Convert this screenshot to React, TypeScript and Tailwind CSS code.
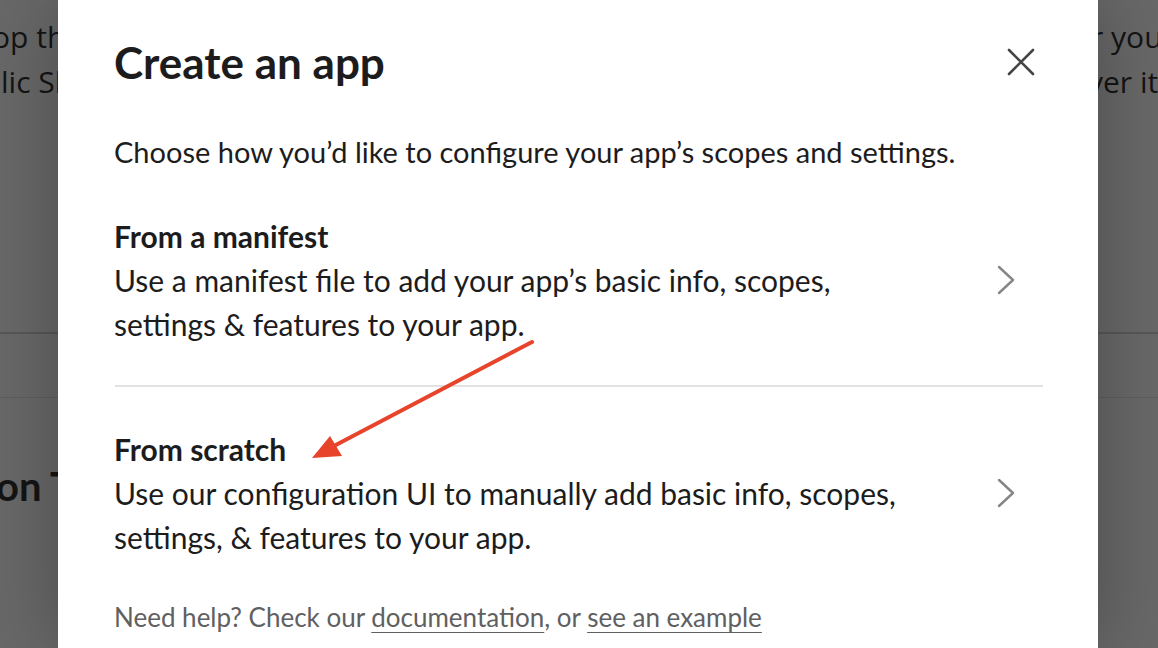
import React from "react";

function Chevron() {
  return (
    <svg width="18" height="30" viewBox="0 0 18 30" className="shrink-0">
      <polyline
        points="2,2 16,15 2,28"
        fill="none"
        stroke="#868686"
        strokeWidth="2.4"
        strokeLinecap="round"
        strokeLinejoin="round"
      />
    </svg>
  );
}

function Option({ title, lines }: { title: string; lines: string[] }) {
  return (
    <div className="flex items-center justify-between pr-[27px]">
      <div className="text-[#1d1c1d]">
        <div className="text-[30px] font-bold leading-[44px]">{title}</div>
        {lines.map((l, i) => (
          <div key={i} className="text-[30px] leading-[44px]">
            {l}
          </div>
        ))}
      </div>
      <Chevron />
    </div>
  );
}

export default function App() {
  return (
    <div
      className="relative h-[648px] w-[1158px] overflow-hidden bg-[#686868]"
      style={{ fontFamily: "Lato, 'Open Sans', sans-serif" }}
    >
      {/* page behind the dimmed overlay */}
      <div
        className="flex h-full justify-between text-[#141414]"
        style={{ fontFamily: "'Open Sans', sans-serif" }}
      >
        <div className="flex w-[80px] flex-col whitespace-nowrap">
          <div className="ml-[-8px] mt-[14px] text-[30px] leading-[45px]">op the</div>
          <div className="ml-[1px] text-[30px] leading-[45px]">lic Sla</div>
          <div className="mt-[228px] h-[2px] bg-[#575757]" />
          <div className="mt-[63px] h-px bg-[#5e5e5e]" />
          <div className="ml-[-4px] mt-[65px] font-['Lato'] text-[40px] font-bold leading-[46px]">on Te</div>
        </div>
        <div className="flex w-[80px] flex-col whitespace-nowrap">
          <div className="ml-[13px] mt-[14px] text-[30px] leading-[45px]">r you</div>
          <div className="ml-[10px] text-[30px] leading-[45px]">ver it</div>
          <div className="mt-[228px] h-[2px] bg-[#575757]" />
          <div className="mt-[63px] h-px bg-[#5e5e5e]" />
        </div>
      </div>

      {/* modal */}
      <div className="absolute inset-0 flex justify-start pl-[58px]">
        <div className="flex h-full w-[1040px] flex-col bg-white pl-[56px] pr-[56px] shadow-[0_0_70px_rgba(0,0,0,0.28)]">
          <div className="mt-[36px] flex items-center justify-between">
            <h1 className="text-[44px] font-bold leading-[52px] text-[#1d1c1d]">Create an app</h1>
            <svg width="28" height="28" viewBox="0 0 28 28" className="mr-[7px]">
              <path
                d="M2 2 L26 26 M26 2 L2 26"
                stroke="#454445"
                strokeWidth="2.6"
                strokeLinecap="round"
              />
            </svg>
          </div>

          <p className="mt-[42px] text-[29px] leading-[44px] text-[#1d1c1d]">
            Choose how you’d like to configure your app’s scopes and settings.
          </p>

          <div className="mt-[40px]">
            <Option
              title="From a manifest"
              lines={[
                "Use a manifest file to add your app’s basic info, scopes,",
                "settings & features to your app.",
              ]}
            />
          </div>

          <div className="-mr-[1px] ml-[1px] mt-[39px] h-[2px] bg-[#e2e2e2]" />

          <div className="mt-[40px]">
            <Option
              title="From scratch"
              lines={[
                "Use our configuration UI to manually add basic info, scopes,",
                "settings, & features to your app.",
              ]}
            />
          </div>

          <p className="mt-[40px] text-[26px] leading-[36px] text-[#616061]">
            Need help? Check our{" "}
            <span className="underline decoration-1 underline-offset-[5px]">documentation</span>, or{" "}
            <span className="underline decoration-1 underline-offset-[5px]">see an example</span>
          </p>
        </div>
      </div>

      {/* annotation arrow */}
      <svg className="pointer-events-none absolute inset-0" width="1158" height="648">
        <line x1="532" y1="342" x2="332" y2="447" stroke="#e8432b" strokeWidth="4" strokeLinecap="round" />
        <polygon points="312,458 330,436 342,456" fill="#e8432b" />
      </svg>
    </div>
  );
}
